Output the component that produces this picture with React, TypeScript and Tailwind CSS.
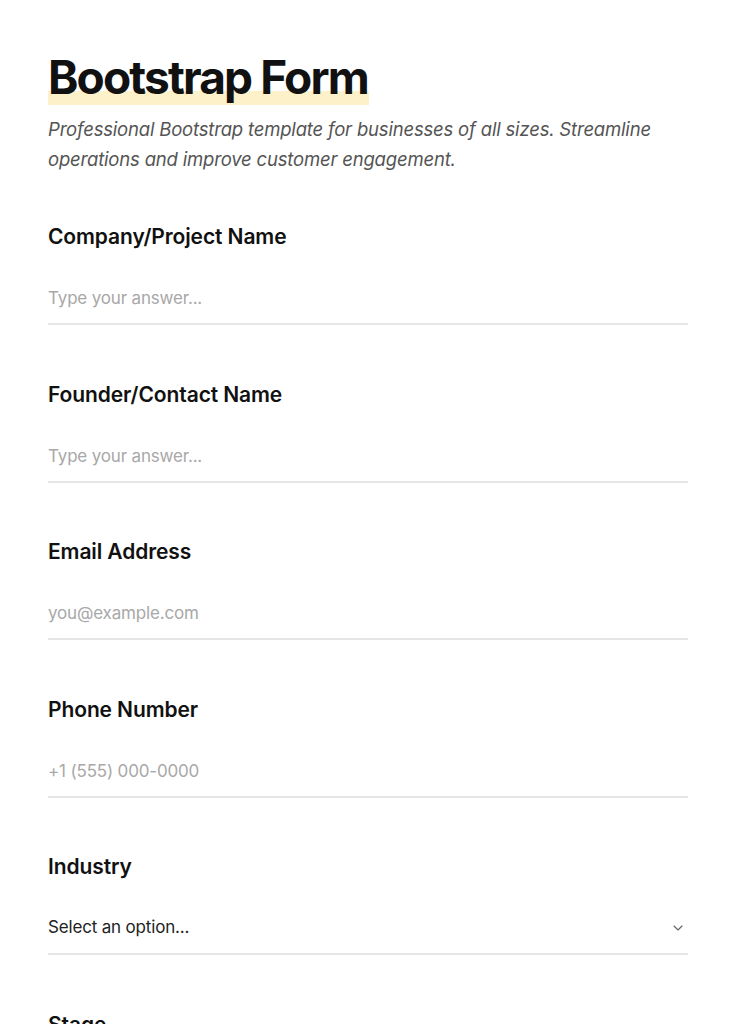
import { ChevronDown } from 'lucide-react';

type Field = {
  label: string;
  placeholder: string;
  type?: 'text' | 'email' | 'tel' | 'select';
};

const fields: Field[] = [
  { label: 'Company/Project Name', placeholder: 'Type your answer...' },
  { label: 'Founder/Contact Name', placeholder: 'Type your answer...' },
  { label: 'Email Address', placeholder: 'you@example.com', type: 'email' },
  { label: 'Phone Number', placeholder: '+1 (555) 000-0000', type: 'tel' },
  { label: 'Industry', placeholder: 'Select an option...', type: 'select' },
  { label: 'Stage', placeholder: 'Select an option...', type: 'select' },
];

export default function App() {
  return (
    <div className="min-h-screen bg-white text-[#111] font-['Inter',sans-serif] px-12 pt-[50px] pb-20">
      <h1 className="text-[46px] font-bold leading-[1.2] tracking-[-0.04em]">
        <span className="inline-block pr-px bg-[linear-gradient(transparent_74%,#fdf1c9_74%)]">
          Bootstrap Form
        </span>
      </h1>
      <p className="mt-[9px] text-[18.5px] italic leading-[30px] text-[#555] tracking-[-0.01em]">
        Professional Bootstrap template for businesses of all sizes. Streamline operations and
        improve customer engagement.
      </p>

      <form className="mt-[49px] flex flex-col gap-[55.5px]">
        {fields.map((f) => (
          <div key={f.label} className="flex flex-col">
            <label className="text-[21px] font-semibold leading-7 tracking-[-0.005em]">
              {f.label}
            </label>
            {f.type === 'select' ? (
              <div className="mt-[22px] flex h-[52px] items-center justify-between border-b-2 border-[#e6e6e6]">
                <span className="text-[17px] text-[#222] tracking-[-0.01em]">{f.placeholder}</span>
                <ChevronDown className="mr-[2px] h-4 w-4 text-[#666]" strokeWidth={1.75} />
              </div>
            ) : (
              <input
                type={f.type ?? 'text'}
                placeholder={f.placeholder}
                className="mt-[22px] h-[52px] border-b-2 border-[#e6e6e6] bg-transparent text-[17px] tracking-[-0.01em] outline-none placeholder:text-[#a8a8a8]"
              />
            )}
          </div>
        ))}
      </form>
    </div>
  );
}
